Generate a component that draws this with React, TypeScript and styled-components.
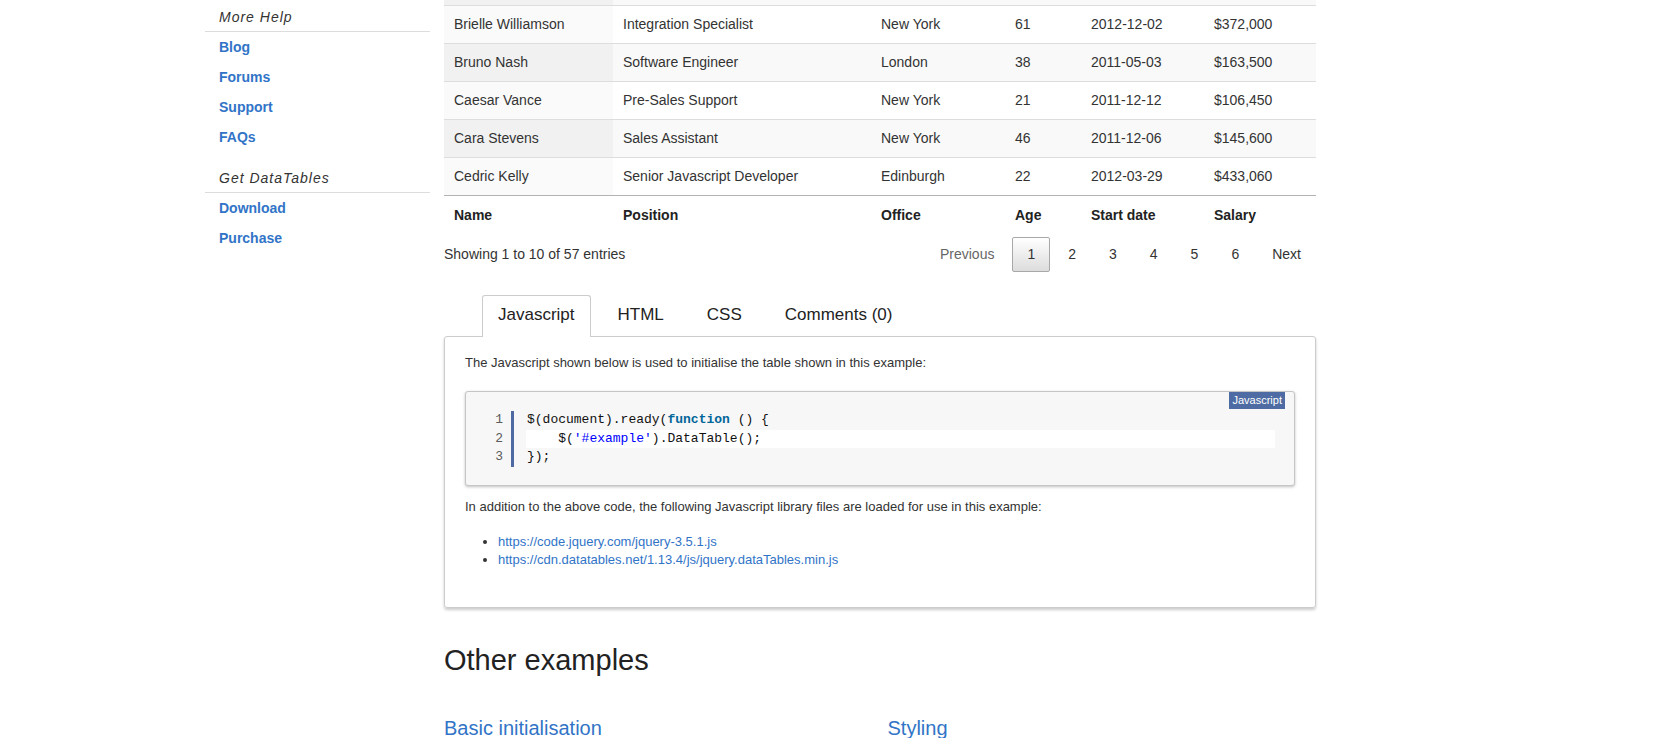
import React from 'react';
import styled, { createGlobalStyle } from 'styled-components';

const linkBlue = '#3174c7';

const GlobalStyle = createGlobalStyle`
    html, body {
        margin: 0;
        padding: 0;
        background: #fff;
    }
    body {
        font-family: "Liberation Sans", Arial, Helvetica, sans-serif;
        font-size: 14px;
        color: #333;
        overflow: hidden;
    }
    * {
        box-sizing: border-box;
    }
`;

const Page = styled.div`
    width: 1250px;
    margin: 0 auto;
    display: flex;
    align-items: flex-start;
    gap: 14px;
`;

const Sidebar = styled.nav`
    width: 225px;
    flex: none;
`;

const SideHeading = styled.div<{ $first?: boolean }>`
    margin-top: ${p => (p.$first ? '0' : '9px')};
    padding: 7px 0 4px 14px;
    line-height: 20px;
    font-style: italic;
    letter-spacing: 1px;
    color: #333;
    border-bottom: 1px solid #ddd;
`;

const SideLink = styled.a`
    display: block;
    padding: 5px 0 5px 14px;
    line-height: 20px;
    font-weight: bold;
    color: ${linkBlue};
    text-decoration: none;
`;

const Main = styled.main`
    width: 872px;
    flex: none;
    /* page is scrolled: the row above Brielle is out of view */
    margin-top: -33px;
`;

const cols = '169px 258px 134px 76px 123px 112px';

const Row = styled.div<{ $striped: boolean }>`
    display: grid;
    grid-template-columns: ${cols};
    border-top: 1px solid #ddd;
    background: ${p => (p.$striped ? '#f9f9f9' : '#fff')};
`;

const Cell = styled.div<{ $sorted?: boolean; $striped?: boolean }>`
    height: 37px;
    padding: 0 10px 2px;
    display: flex;
    align-items: center;
    white-space: nowrap;
    background: ${p => (p.$sorted ? (p.$striped ? '#f1f1f1' : '#fafafa') : 'transparent')};
`;

const FootRow = styled.div`
    display: grid;
    grid-template-columns: ${cols};
    border-top: 1px solid #b3b3b3;
`;

const FootCell = styled.div`
    padding: 11px 10px 5px;
    line-height: 17px;
    font-weight: bold;
    color: #222;
`;

const TableBottom = styled.div`
    margin-top: 8px;
    display: flex;
    align-items: center;
    justify-content: space-between;
`;

const Info = styled.div`
    padding-bottom: 2px;
`;

const Paginate = styled.div`
    display: flex;
    gap: 3px;
`;

const PageButton = styled.a<{ $current?: boolean; $disabled?: boolean }>`
    height: 35px;
    min-width: 37px;
    padding: 0 14px;
    line-height: 33px;
    text-align: center;
    border-radius: 2px;
    border: 1px solid ${p => (p.$current ? '#a8a8a8' : 'transparent')};
    background: ${p => (p.$current ? 'linear-gradient(to bottom, #fff 0%, #dcdcdc 100%)' : 'transparent')};
    color: ${p => (p.$disabled ? '#666' : '#333')};
`;

const TabBar = styled.ul`
    list-style: none;
    margin: 23px 0 0;
    padding: 0 0 0 38px;
    display: flex;
    gap: 11px;
`;

const Tab = styled.li<{ $active?: boolean }>`
    position: relative;
    z-index: ${p => (p.$active ? 1 : 0)};
    margin-bottom: -1px;
    padding: 9px 15px 12px;
    font-size: 17px;
    line-height: 20px;
    color: #222;
    background: ${p => (p.$active ? '#fff' : 'transparent')};
    border: 1px solid ${p => (p.$active ? '#ccc' : 'transparent')};
    border-bottom: none;
    border-radius: 3px 3px 0 0;
`;

const TabPanel = styled.div`
    border: 1px solid #ccc;
    border-radius: 3px;
    box-shadow: 0 2px 3px rgba(0, 0, 0, 0.2);
    padding: 17px 20px 20px;
    font-size: 13px;
    line-height: 18px;
`;

const Para = styled.p`
    margin: 0;
    color: #333;
`;

const CodeBlock = styled.div`
    position: relative;
    margin: 19px 0 12px;
    display: flex;
    padding: 19px 19px 18px 0;
    background: #f7f7f7;
    border: 1px solid #c6c6c6;
    border-radius: 3px;
    box-shadow: 0 1px 3px rgba(0, 0, 0, 0.25);
    font-family: "Liberation Mono", "Courier New", monospace;
    font-size: 13px;
    line-height: 18.5px;
`;

const Badge = styled.span`
    position: absolute;
    top: 0;
    right: 9px;
    padding: 1px 3px;
    line-height: 15px;
    font-family: "Liberation Sans", Arial, sans-serif;
    font-size: 11px;
    color: #fff;
    background: #4e6ca3;
`;

const Gutter = styled.div`
    width: 48px;
    flex: none;
    padding-right: 8px;
    text-align: right;
    color: #5c5c5c;
    border-right: 3px solid #4f6aa3;
`;

const CodeLines = styled.div`
    flex: 1;
    margin-left: 12px;
`;

const CodeLine = styled.div<{ $highlight?: boolean }>`
    padding-left: 1px;
    white-space: pre;
    color: #111;
    background: ${p => (p.$highlight ? '#fff' : 'transparent')};
`;

const Keyword = styled.span`
    color: #069;
    font-weight: bold;
`;

const Str = styled.span`
    color: #00f;
`;

const FileList = styled.ul`
    margin: 17px 0 18px;
    padding-left: 33px;
`;

const FileLink = styled.a`
    color: ${linkBlue};
    text-decoration: none;
`;

const SectionTitle = styled.h2`
    margin: 36px 0 0;
    font-size: 29px;
    line-height: 32px;
    font-weight: normal;
    color: #222;
`;

const Examples = styled.div`
    margin-top: 42px;
    display: grid;
    grid-template-columns: 1fr 1fr;
    column-gap: 15px;
`;

const ExampleLink = styled.a`
    font-size: 20px;
    line-height: 20px;
    color: ${linkBlue};
    text-decoration: none;
`;

const rows = [
    ['Brenden Wagner', 'Software Engineer', 'San Francisco', '28', '2011-06-07', '$206,850'],
    ['Brielle Williamson', 'Integration Specialist', 'New York', '61', '2012-12-02', '$372,000'],
    ['Bruno Nash', 'Software Engineer', 'London', '38', '2011-05-03', '$163,500'],
    ['Caesar Vance', 'Pre-Sales Support', 'New York', '21', '2011-12-12', '$106,450'],
    ['Cara Stevens', 'Sales Assistant', 'New York', '46', '2011-12-06', '$145,600'],
    ['Cedric Kelly', 'Senior Javascript Developer', 'Edinburgh', '22', '2012-03-29', '$433,060'],
];

const headers = ['Name', 'Position', 'Office', 'Age', 'Start date', 'Salary'];

export default function App(): React.ReactElement {
    return (
        <>
            <GlobalStyle />
            <Page>
                <Sidebar>
                    <SideHeading $first>More Help</SideHeading>
                    <SideLink>Blog</SideLink>
                    <SideLink>Forums</SideLink>
                    <SideLink>Support</SideLink>
                    <SideLink>FAQs</SideLink>
                    <SideHeading>Get DataTables</SideHeading>
                    <SideLink>Download</SideLink>
                    <SideLink>Purchase</SideLink>
                </Sidebar>
                <Main>
                    {rows.map((r, i) => {
                        const striped = i % 2 === 0;
                        return (
                            <Row key={r[0]} $striped={striped}>
                                {r.map((c, j) => (
                                    <Cell key={j} $sorted={j === 0} $striped={striped}>{c}</Cell>
                                ))}
                            </Row>
                        );
                    })}
                    <FootRow>
                        {headers.map(h => <FootCell key={h}>{h}</FootCell>)}
                    </FootRow>
                    <TableBottom>
                        <Info>Showing 1 to 10 of 57 entries</Info>
                        <Paginate>
                            <PageButton $disabled>Previous</PageButton>
                            <PageButton $current>1</PageButton>
                            {['2', '3', '4', '5', '6'].map(n => <PageButton key={n}>{n}</PageButton>)}
                            <PageButton>Next</PageButton>
                        </Paginate>
                    </TableBottom>

                    <TabBar>
                        <Tab $active>Javascript</Tab>
                        <Tab>HTML</Tab>
                        <Tab>CSS</Tab>
                        <Tab>Comments (0)</Tab>
                    </TabBar>
                    <TabPanel>
                        <Para>The Javascript shown below is used to initialise the table shown in this example:</Para>
                        <CodeBlock>
                            <Badge>Javascript</Badge>
                            <Gutter>
                                <div>1</div>
                                <div>2</div>
                                <div>3</div>
                            </Gutter>
                            <CodeLines>
                                <CodeLine>$(document).ready(<Keyword>function</Keyword> () {'{'}</CodeLine>
                                <CodeLine $highlight>{'    $('}<Str>'#example'</Str>).DataTable();</CodeLine>
                                <CodeLine>{'});'}</CodeLine>
                            </CodeLines>
                        </CodeBlock>
                        <Para>In addition to the above code, the following Javascript library files are loaded for use in this example:</Para>
                        <FileList>
                            <li><FileLink>https://code.jquery.com/jquery-3.5.1.js</FileLink></li>
                            <li><FileLink>https://cdn.datatables.net/1.13.4/js/jquery.dataTables.min.js</FileLink></li>
                        </FileList>
                    </TabPanel>

                    <SectionTitle>Other examples</SectionTitle>
                    <Examples>
                        <ExampleLink>Basic initialisation</ExampleLink>
                        <ExampleLink>Styling</ExampleLink>
                    </Examples>
                </Main>
            </Page>
        </>
    );
}
